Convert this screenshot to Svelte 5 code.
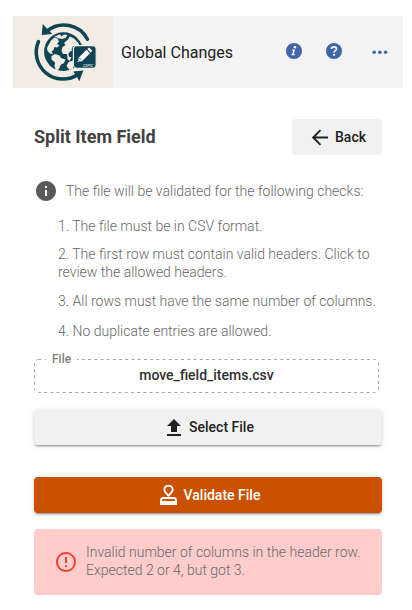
<script>
  const checks = [
    'The file must be in CSV format.',
    'The first row must contain valid headers. Click to review the allowed headers.',
    'All rows must have the same number of columns.',
    'No duplicate entries are allowed.'
  ];
</script>

<div class="app">
  <header>
    <svg class="logo" viewBox="0 0 100 72" width="100" height="72">
      <g fill="none" stroke="#0e4455" stroke-width="3.500" stroke-linecap="round">
        <path d="M34 15A26.800 26.800 0 0 1 74.500 23.200" />
        <path d="M25.500 25.500A26.800 26.800 0 0 0 65 58.500" />
      </g>
      <path d="M28.700 18.900L29.700 8L32.500 11L36 14.500L39.300 18ZM60.300 55.500L70.300 54.500L66.300 65.300L63.800 60.500Z" fill="#0e4455" />
      <circle cx="50.500" cy="35.700" r="19.400" fill="#0e4455" />
      <g fill="#f1ede4">
        <path d="M35.500 29L38 24.500L41.500 21.500L44.500 22.500L46 25.500L44 28L46.500 29.500L44 31.500L41.500 31L40.500 34L38.500 35.500L40 38L37 37.500L34.500 35L34 32Z" />
        <path d="M38.500 40L42 38L46.500 39.500L48 42L52.500 43.500L51 47L47.500 49L46 53L43 54.500L41.500 50L42 46.500L38.500 43.500Z" />
        <path d="M41.500 20.500L47 18.300L48.500 20.500L51 18.500L54.500 19L52.500 22L49 23L46 22.500Z" />
        <path d="M49.500 31L52.500 29L51 27L54.500 24L57 20.500L61 22.500L65.500 27L66.500 30H60L58.500 34L60 37L58 42L56.500 45L54.500 43L54 38L50 38L48.500 35Z" />
        <path d="M55.500 46L60 44.500V53L56.500 54L53.500 50Z" />
      </g>
      <path d="M58.500 35Q55.500 36 55.500 38.500Q55.500 41.500 59 41L61 39V35Z" fill="#0e4455" />
      <rect x="60.400" y="29.600" width="22.800" height="22.800" rx="3.600" fill="#0e4455" stroke="#f1ede4" stroke-width="1.200" />
      <path d="M64.600 46L65.800 41.500L73.500 33.800L77 37.300L69.300 45ZM74.300 33L75.300 32Q76 31.500 76.800 32.200L78.800 34.200Q79.300 35 78.800 35.500L77.800 36.500Z" fill="#fff" />
      <path d="M66.300 41.900L69 44.600M65.200 44.300L66.500 45.500" stroke="#0e4455" stroke-width=".7" />
      <text x="70" y="50.500" textLength="10" lengthAdjust="spacingAndGlyphs" font-size="4.200">CSPIC</text>
    </svg>
    <h1>Global Changes</h1>
    <nav>
      <svg viewBox="0 0 16 16" width="16" height="16">
        <circle cx="8" cy="8" r="8" fill="#4065a8" />
        <path d="M6.100 6.500H9L7.700 11.300H9.100L8.800 12.300H5.300L5.600 11.300H6.200L7.200 7.500H5.800Z" fill="#fff" />
        <circle cx="8.900" cy="4.200" r="1.300" fill="#fff" />
      </svg>
      <svg viewBox="0 0 16 16" width="16" height="16">
        <circle cx="8" cy="8" r="8" fill="#4065a8" />
        <path d="M5.500 6C5.600 3.300 10.400 3.200 10.500 6C10.600 7.800 8 7.500 8 9.500" fill="none" stroke="#fff" stroke-width="1.700" />
        <circle cx="8" cy="11.800" r="1.150" fill="#fff" />
      </svg>
      <svg viewBox="0 0 16 16" width="16" height="16" fill="#4065a8">
        <circle cx="2.200" cy="9.200" r="1.800" /><circle cx="7.900" cy="9.200" r="1.800" /><circle cx="13.600" cy="9.200" r="1.800" />
      </svg>
    </nav>
  </header>

  <main>
    <div class="title">
      <h2>Split Item Field</h2>
      <button class="back">
        <svg viewBox="0 0 18 18" width="18" height="18" fill="none" stroke="#212121" stroke-width="1.900"><path d="M17 9.500H2.500M9.500 2.200L2.200 9.500L9.500 16.800" /></svg>
        <span>Back</span>
      </button>
    </div>

    <div class="info">
      <svg viewBox="2 2 20 20" width="20" height="20" fill="#5a5a5a"><path d="M12 2C6.480 2 2 6.480 2 12s4.480 10 10 10 10-4.480 10-10S17.520 2 12 2zm1 15h-2v-6h2v6zm0-8h-2V7h2v2z" /></svg>
      <span>The file will be validated for the following checks:</span>
    </div>
    <div class="checks">
      {#each checks as check, i}
        <p>{i + 1}. {check}</p>
      {/each}
    </div>

    <fieldset>
      <svg class="outline" viewBox="0 0 345 34" width="345" height="34"><rect x=".5" y=".5" width="344" height="33" rx="4" /></svg>
      <legend>File</legend>
      <div>move_field_items.csv</div>
    </fieldset>

    <button class="wide select">
      <svg viewBox="0 0 14 17" width="14" height="17" fill="#212121"><path d="M7 0L0 7H4V13H10V7H14ZM0 15H14V17H0Z" /></svg>
      <span>Select File</span>
    </button>
    <button class="wide validate">
      <svg viewBox="0 0 17 20" width="17" height="20"><path d="M8.500 10.800L4.900 6.600A4.100 4.100 0 1 1 12.100 6.600Z" fill="none" stroke="#fff" stroke-width="1.800" stroke-linejoin="round" /><path d="M2.500 12H14.500Q17 12.500 17 15V20H0V15Q0 12.500 2.500 12ZM2.500 14L2 16H15L14.500 14Z" fill="#fff" fill-rule="evenodd" /></svg>
      <span>Validate File</span>
    </button>

    <div class="error">
      <svg viewBox="2 2 20 20" width="20" height="20" fill="#f44336"><path d="M11 15h2v2h-2zm0-8h2v6h-2zm.99-5C6.470 2 2 6.480 2 12s4.470 10 9.990 10C17.520 22 22 17.520 22 12S17.520 2 11.990 2zM12 20c-4.420 0-8-3.580-8-8s3.580-8 8-8 8 3.580 8 8-3.580 8-8 8z" /></svg>
      <p>Invalid number of columns in the header row. Expected 2 or 4, but got 3.</p>
    </div>
  </main>
</div>

<style>
  .app {
    box-sizing: border-box;
    width: 412px;
    height: 610px;
    padding: 16px 9px 0 13px;
    overflow: hidden;
    background: #fff;
    font-family: Roboto, sans-serif;
    color: #212121;
  }
  svg { display: block; flex: none; }
  header {
    display: flex;
    align-items: center;
    height: 72px;
    background: #f4f4f4;
  }
  .logo { background: #f1ede4; }
  .logo text { fill: #cbd6d8; font-family: Roboto, sans-serif; font-weight: 700; font-style: italic; }
  h1 { margin: 2px 0 0 8px; font-size: 16px; font-weight: 400; line-height: 24px; }
  nav { display: flex; gap: 24px; margin: 0 15px 2px auto; }
  nav svg:last-child { margin-left: 6px; }
  main { padding: 31px 21px 0; }
  .title { display: flex; justify-content: space-between; align-items: center; height: 36px; }
  h2 { margin: 0; font-size: 18px; font-weight: 700; line-height: 24px; color: #424242; }
  button {
    display: flex;
    align-items: center;
    justify-content: center;
    box-sizing: border-box;
    height: 36px;
    padding: 0;
    border: 0;
    border-radius: 4px;
    background: #f1f1f1;
    color: #212121;
    font: 500 14px/20px Roboto, sans-serif;
  }
  .back { width: 90px; gap: 6px; padding-left: 3px; }
  .info {
    display: flex;
    align-items: center;
    gap: 10px;
    height: 20px;
    margin: 26px 0 0 2px;
    font-size: 14px;
    font-weight: 300;
    color: #686868;
    white-space: nowrap;
  }
  .checks { padding: 16px 0 0 24px; }
  .checks p {
    margin: 0 -16px 11px 0;
    font-size: 14px;
    font-weight: 300;
    line-height: 18px;
    color: #686868;
  }
  .checks p:first-child { margin-bottom: 10px; }
  .checks p:nth-child(2) { width: 325px; }
  .checks p:nth-child(3) { margin-bottom: 12px; }
  .checks p:last-child { margin-bottom: 0; }
  fieldset {
    position: relative;
    box-sizing: border-box;
    width: 345px;
    height: 34px;
    margin: 19px 0 16px;
    padding: 1px 0 0;
    border: 0;
    text-align: center;
    font-size: 14px;
    font-weight: 500;
    line-height: 31px;
    color: #303030;
  }
  .outline { position: absolute; inset: 0; fill: none; stroke: #a6a6a6; stroke-dasharray: 3 3.200; }
  legend {
    position: absolute;
    top: -8px;
    left: 12px;
    padding: 0 6px;
    background: #fff;
    color: #808080;
    font-size: 12px;
    line-height: 16px;
  }
  .wide {
    width: 348px;
    gap: 8px;
    box-shadow: 0 3px 1px -2px rgba(0,0,0,.2), 0 2px 2px rgba(0,0,0,.14), 0 1px 5px rgba(0,0,0,.12);
  }
  .select { gap: 8px; padding-left: 5px; }
  .validate { gap: 7px; margin-top: 32px; padding-left: 4px; background: #c95100; color: #fff; }
  .error {
    display: flex;
    align-items: center;
    gap: 10px;
    box-sizing: border-box;
    width: 348px;
    height: 66px;
    margin-top: 16px;
    padding: 0 10px 0 22px;
    border-radius: 4px;
    background: #ffcccc;
  }
  .error p { margin: 0 0 2px; width: 285px; font-size: 14px; font-weight: 300; line-height: 18px; color: #686868; }
</style>
